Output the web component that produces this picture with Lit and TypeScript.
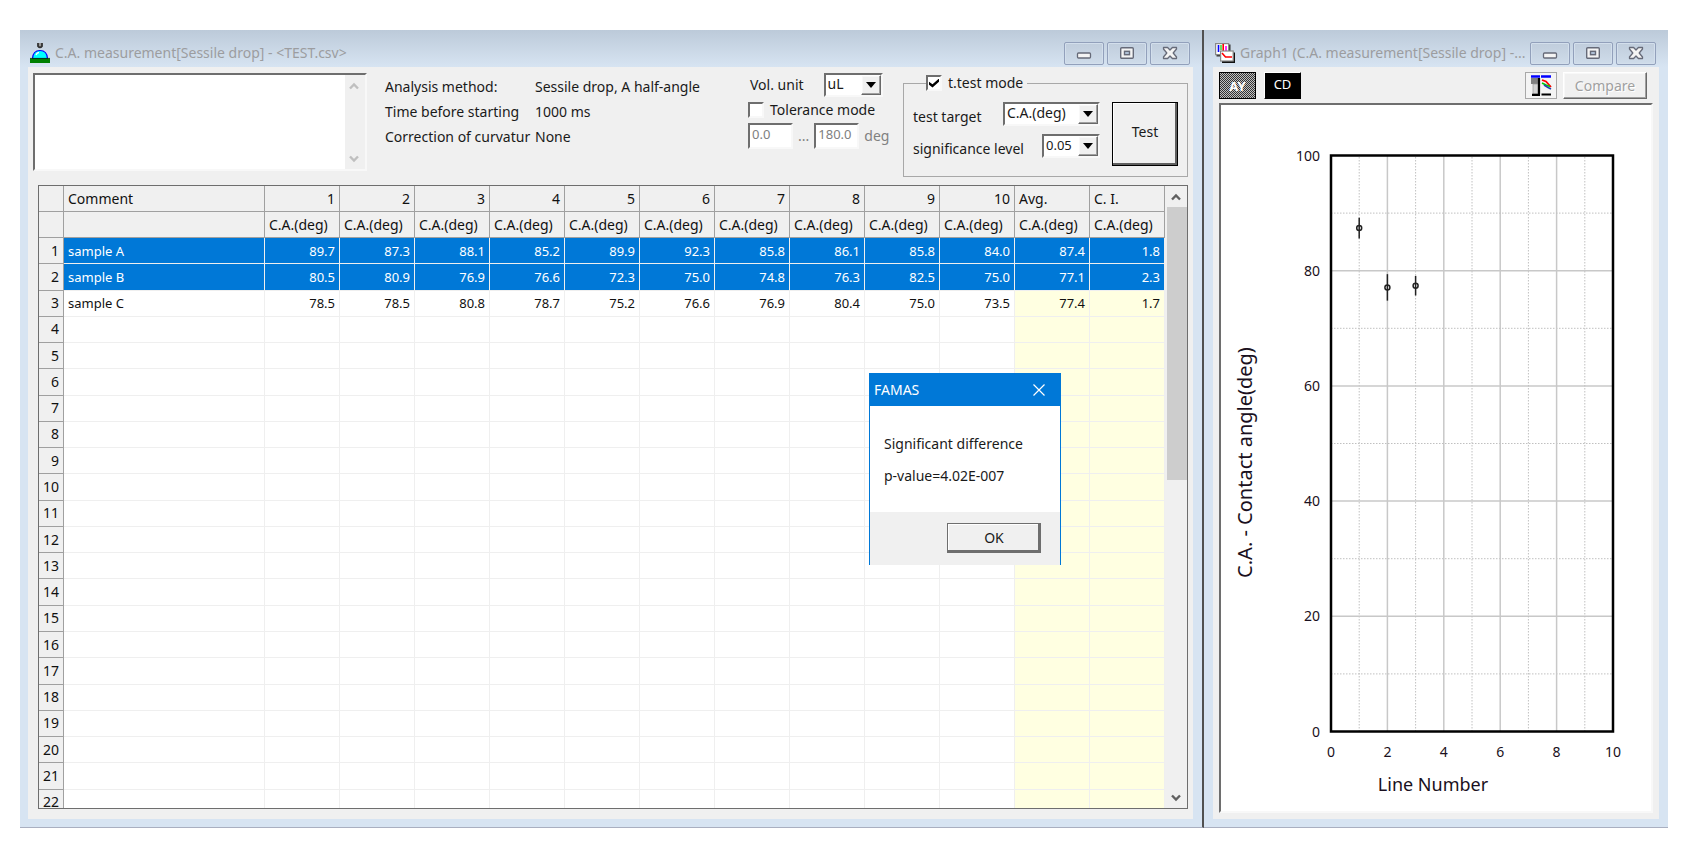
import { LitElement, html, svg, css, nothing } from "lit";
import { customElement, property } from "lit/decorators.js";
import { classMap } from "lit/directives/class-map.js";

const base = css`
  * {
    box-sizing: border-box;
  }
  button,
  input,
  select,
  textarea {
    font: inherit;
    color: inherit;
    margin: 0;
    padding: 0;
    border-radius: 0;
  }
  .raised {
    background: #f0f0f0;
    border: 1px solid;
    border-color: #fff #696969 #696969 #fff;
    box-shadow: inset -1px -1px 0 #a0a0a0, inset 1px 1px 0 #f8f8f8;
  }
  .sunken {
    background: #fff;
    border: 2px solid;
    border-color: #6e6e6e #f8f8f8 #f8f8f8 #6e6e6e;
  }
`;

const COLUMNS = ["1", "2", "3", "4", "5", "6", "7", "8", "9", "10"];
const ROW_COUNT = 22;

interface Sample {
  name: string;
  values: string[];
  avg: number;
  ci: number;
  selected: boolean;
}

const SAMPLES: Sample[] = [
  {
    name: "sample A",
    values: ["89.7", "87.3", "88.1", "85.2", "89.9", "92.3", "85.8", "86.1", "85.8", "84.0"],
    avg: 87.4,
    ci: 1.8,
    selected: true,
  },
  {
    name: "sample B",
    values: ["80.5", "80.9", "76.9", "76.6", "72.3", "75.0", "74.8", "76.3", "82.5", "75.0"],
    avg: 77.1,
    ci: 2.3,
    selected: true,
  },
  {
    name: "sample C",
    values: ["78.5", "78.5", "80.8", "78.7", "75.2", "76.6", "76.9", "80.4", "75.0", "73.5"],
    avg: 77.4,
    ci: 1.7,
    selected: false,
  },
];

@customElement("mdi-window")
class MdiWindow extends LitElement {
  @property() heading = "";

  static styles = [
    base,
    css`
      :host {
        display: flex;
        flex-direction: column;
        min-width: 0;
        min-height: 0;
        padding: 0 9px 8px;
        background: linear-gradient(#bccad9, #d7e4f2 37px);
        border-bottom: 1px solid #a9afc0;
      }
      .bar {
        display: flex;
        align-items: center;
        height: 37px;
        padding: 9px 3px 0 2px;
        flex: none;
      }
      .title {
        flex: 1;
        min-width: 0;
        margin: 0;
        padding-left: 5px;
        overflow: hidden;
        white-space: nowrap;
        font-size: 14px;
        font-weight: 400;
        line-height: 20px;
        color: #9c9da0;
      }
      .controls {
        display: flex;
        gap: 3px;
      }
      .control {
        display: grid;
        place-items: center;
        width: 40px;
        height: 23px;
        border: 1px solid #92a0bb;
        border-radius: 2px;
        background: linear-gradient(#c0cddc, #cfdcea);
        box-shadow: inset 0 0 0 1px #d3dfec;
      }
      .body {
        display: flex;
        flex-direction: column;
        flex: 1;
        min-height: 0;
        background: #f0f0f0;
      }
    `,
  ];

  render() {
    return html`
      <header class="bar">
        <slot name="icon"></slot>
        <h2 class="title">${this.heading}</h2>
        <div class="controls">
          <button class="control" aria-label="Minimize">
            <svg width="16" height="14" viewBox="0 0 16 14">
              <rect x="1.5" y="7" width="13" height="5" rx="1" fill="#f4f4f4" stroke="#666a78" stroke-width="1.3" />
            </svg>
          </button>
          <button class="control" aria-label="Maximize">
            <svg width="16" height="14" viewBox="0 0 16 14">
              <rect x="1.7" y="1.7" width="12.6" height="10.6" rx="1" fill="#f4f4f4" stroke="#666a78" stroke-width="1.4" />
              <rect x="5.5" y="5.3" width="5" height="3.4" fill="#aebfd4" stroke="#666a78" stroke-width="1.4" />
            </svg>
          </button>
          <button class="control" aria-label="Close">
            <svg width="16" height="14" viewBox="0 0 16 14">
              <path
                d="M1.5 1.5H5.6L8 4L10.4 1.5H14.5V3L11.2 7L14.5 11V12.5H10.4L8 10L5.6 12.5H1.5V11L4.8 7L1.5 3Z"
                fill="#f4f4f4"
                stroke="#666a78"
                stroke-width="1.3"
                stroke-linejoin="round"
              />
            </svg>
          </button>
        </div>
      </header>
      <div class="body"><slot></slot></div>
    `;
  }
}

@customElement("scroll-strip")
class ScrollStrip extends LitElement {
  @property({ type: Number }) size = 0;

  static styles = [
    base,
    css`
      :host {
        display: flex;
        flex-direction: column;
        width: 20px;
        flex: none;
        background: #f0f0f0;
        color: #606060;
      }
      :host([disabled]) {
        color: #bfbfbf;
      }
      .arrow {
        display: grid;
        place-items: center;
        height: 21px;
        flex: none;
        padding-right: 2px;
        border: 0;
        background: none;
      }
      .track {
        flex: 1;
        min-height: 0;
      }
      .thumb {
        background: #cdcdcd;
      }
    `,
  ];

  render() {
    return html`
      <button class="arrow" aria-label="Scroll up">
        <svg width="10" height="8" viewBox="0 0 10 8">
          <path d="M1 6.5L5 2.5L9 6.5" fill="none" stroke="currentColor" stroke-width="2.4" />
        </svg>
      </button>
      <div class="track">
        ${this.size ? html`<div class="thumb" style="height:${this.size}%"></div>` : nothing}
      </div>
      <button class="arrow" aria-label="Scroll down">
        <svg width="10" height="8" viewBox="0 0 10 8">
          <path d="M1 1.5L5 5.5L9 1.5" fill="none" stroke="currentColor" stroke-width="2.4" />
        </svg>
      </button>
    `;
  }
}

@customElement("measure-toolbar")
class MeasureToolbar extends LitElement {
  static styles = [
    base,
    css`
      :host {
        display: grid;
        grid-template-columns: 334fr 345fr 137fr 285px;
        column-gap: 18px;
        padding: 6px 5px 8px;
        font-size: 14px;
        line-height: 18px;
        color: #1a1a1a;
        white-space: nowrap;
      }
      .memo {
        display: flex;
        height: 98px;
      }
      .memo textarea {
        flex: 1;
        min-width: 0;
        border: 0;
        outline: 0;
        resize: none;
      }
      .info {
        display: grid;
        grid-template-columns: 150px 1fr;
        grid-auto-rows: 25px;
        align-items: center;
        align-content: start;
        margin: 1px 0 0;
      }
      .info dt,
      .info dd {
        margin: 0;
      }
      .volume {
        display: flex;
        flex-direction: column;
        gap: 4px;
        min-width: 0;
      }
      .line {
        display: flex;
        align-items: center;
      }
      .unit {
        gap: 20px;
        padding-left: 2px;
      }
      .tolerance {
        gap: 6px;
      }
      .range {
        gap: 5px;
        color: #808080;
      }
      .range input {
        width: 45px;
        height: 26px;
        padding: 0 2px 5px;
        font-size: 13px;
      }
      .combo {
        display: grid;
        grid-template-columns: 1fr 20px;
        height: 24px;
      }
      .combo select {
        grid-area: 1 / 1 / 2 / 3;
        min-width: 0;
        padding: 0 20px 2px 2px;
        appearance: none;
        border: 0;
        outline: 0;
        background: none;
      }
      .drop {
        grid-area: 1 / 2;
        display: grid;
        place-items: center;
        pointer-events: none;
      }
      .w-unit {
        width: 59px;
      }
      .w-target {
        width: 97px;
      }
      .w-level {
        width: 58px;
        font-size: 13px;
      }
      .check {
        display: grid;
        place-items: center;
        width: 16px;
        height: 16px;
        appearance: none;
      }
      .check:checked::before {
        content: "";
        width: 10px;
        height: 9px;
        background: #000;
        clip-path: polygon(0 35%, 35% 65%, 100% 0, 100% 35%, 35% 100%, 0 70%);
      }
      .group {
        display: grid;
        grid-template-columns: 1fr auto;
        column-gap: 12px;
        height: 102px;
        min-width: 0;
        margin: 2px 0 0;
        padding: 11px 9px 0;
        border: 1px solid #a8a8a8;
      }
      .group legend {
        display: flex;
        align-items: center;
        gap: 6px;
        height: 16px;
        margin-left: 13px;
        padding: 0 4px 0 0;
      }
      .fields {
        display: flex;
        flex-direction: column;
        gap: 8px;
      }
      .field {
        display: flex;
        align-items: flex-end;
        justify-content: space-between;
      }
      .test {
        width: 66px;
        height: 64px;
        border-color: #000;
        box-shadow: inset -2px -2px 0 #606060, inset 1px 1px 0 #fff;
        padding-bottom: 4px;
      }
    `,
  ];

  private drop() {
    return html`<span class="drop raised">
      <svg width="10" height="6" viewBox="0 0 10 6"><path d="M0 0H10L5 6Z" fill="#000" /></svg>
    </span>`;
  }

  render() {
    return html`
      <div class="memo sunken">
        <textarea aria-label="Memo"></textarea>
        <scroll-strip disabled></scroll-strip>
      </div>
      <dl class="info">
        <dt>Analysis method:</dt>
        <dd>Sessile drop, A half-angle</dd>
        <dt>Time before starting</dt>
        <dd>1000 ms</dd>
        <dt>Correction of curvatur</dt>
        <dd>None</dd>
      </dl>
      <div class="volume">
        <div class="line unit">
          <label for="unit">Vol. unit</label>
          <span class="combo sunken w-unit">
            <select id="unit">
              <option>uL</option>
            </select>
            ${this.drop()}
          </span>
        </div>
        <div class="line tolerance">
          <input class="check sunken" id="tolerance" type="checkbox" />
          <label for="tolerance">Tolerance mode</label>
        </div>
        <div class="line range">
          <input class="sunken" aria-label="Minimum angle" value="0.0" readonly />
          <span>...</span>
          <input class="sunken" aria-label="Maximum angle" value="180.0" readonly />
          <span>deg</span>
        </div>
      </div>
      <fieldset class="group">
        <legend>
          <input class="check sunken" id="ttest" type="checkbox" checked />
          <label for="ttest">t.test mode</label>
        </legend>
        <div class="fields">
          <div class="field">
            <label for="target">test target</label>
            <span class="combo sunken w-target">
              <select id="target">
                <option>C.A.(deg)</option>
              </select>
              ${this.drop()}
            </span>
          </div>
          <div class="field">
            <label for="level">significance level</label>
            <span class="combo sunken w-level">
              <select id="level">
                <option>0.05</option>
              </select>
              ${this.drop()}
            </span>
          </div>
        </div>
        <button class="test raised">Test</button>
      </fieldset>
    `;
  }
}

@customElement("result-sheet")
class ResultSheet extends LitElement {
  static styles = [
    base,
    css`
      :host {
        display: flex;
        flex: 1;
        gap: 2px;
        min-height: 0;
        margin: 0 5px 10px 10px;
        border: 1px solid #6e6e6e;
      }
      .view {
        flex: 1;
        min-width: 0;
        overflow: hidden;
      }
      table {
        width: 100%;
        height: 630px;
        table-layout: fixed;
        border-collapse: separate;
        border-spacing: 0;
        font-size: 13px;
        line-height: 18px;
        color: #111;
      }
      tr {
        height: 26px;
      }
      th,
      td {
        padding: 0 4px;
        font-weight: 400;
        text-align: right;
        white-space: nowrap;
        overflow: hidden;
      }
      th {
        font-size: 14px;
        background: #f0f0f0;
        border-right: 1px solid #a0a0a0;
        border-bottom: 1px solid #a0a0a0;
      }
      td {
        background: #fff;
        border-right: 1px solid #efefef;
        border-bottom: 1px solid #efefef;
      }
      .left {
        text-align: left;
      }
      .stat {
        background: #ffffe1;
      }
      .selected td {
        background: #0078d7;
        color: #fff;
      }
      .c-head {
        width: 25px;
      }
      .c-value {
        width: 75px;
      }
    `,
  ];

  private row(index: number) {
    const sample = SAMPLES[index];
    return html`<tr class=${classMap({ selected: !!sample?.selected })}>
      <th scope="row">${index + 1}</th>
      <td class="left">${sample?.name}</td>
      ${COLUMNS.map((_, i) => html`<td>${sample?.values[i]}</td>`)}
      <td class="stat">${sample?.avg.toFixed(1)}</td>
      <td class="stat">${sample?.ci.toFixed(1)}</td>
    </tr>`;
  }

  render() {
    return html`
      <div class="view">
        <table>
          <colgroup>
            <col class="c-head" />
            <col />
            <col class="c-value" span="12" />
          </colgroup>
          <thead>
            <tr>
              <th></th>
              <th class="left" scope="col">Comment</th>
              ${COLUMNS.map((c) => html`<th scope="col">${c}</th>`)}
              <th class="left" scope="col">Avg.</th>
              <th class="left" scope="col">C. I.</th>
            </tr>
            <tr>
              <th></th>
              <th></th>
              ${Array.from({ length: 12 }, () => html`<th class="left">C.A.(deg)</th>`)}
            </tr>
          </thead>
          <tbody>
            ${Array.from({ length: ROW_COUNT }, (_, i) => this.row(i))}
          </tbody>
        </table>
      </div>
      <scroll-strip size="47"></scroll-strip>
    `;
  }
}

@customElement("angle-graph")
class AngleGraph extends LitElement {
  static styles = [
    base,
    css`
      :host {
        display: flex;
        flex-direction: column;
        flex: 1;
        min-height: 0;
        padding: 5px 6px 6px;
      }
      .tools {
        display: flex;
        align-items: center;
        gap: 8px;
        height: 27px;
        margin-bottom: 4px;
        padding-right: 6px;
        font-size: 14px;
        line-height: 18px;
      }
      .mode {
        width: 37px;
        height: 27px;
        border: 1px solid;
        border-color: #fff #000 #000 #fff;
        background: #000;
        color: #fff;
        font-size: 13px;
        padding-bottom: 3px;
      }
      .mode.average {
        border-color: #000;
        background: repeating-conic-gradient(#333 0 25%, #c0c0c0 0 50%) 0 0 / 2px 2px;
        font-weight: 700;
        padding: 0;
      }
      .layout {
        display: grid;
        place-items: center;
        width: 32px;
        height: 27px;
        margin-left: auto;
        border: 1px solid #a8a8a8;
        background: #f4f4f4;
      }
      .compare {
        width: 84px;
        height: 27px;
        margin-left: -2px;
        color: #a0a0a0;
        text-shadow: 1px 1px 0 #fff;
      }
      .canvas {
        flex: 1;
        min-height: 0;
      }
      .plot {
        display: block;
        width: 100%;
        height: 100%;
      }
      .tick {
        font-size: 14px;
        fill: #1a1020;
      }
      .axis {
        font-size: 18px;
        fill: #1a1020;
        text-anchor: middle;
      }
      .axis.vertical {
        font-size: 20px;
      }
      .end {
        text-anchor: end;
      }
      .middle {
        text-anchor: middle;
      }
      .major {
        stroke: #c8c8c8;
        stroke-width: 1.5;
      }
      .minor {
        stroke: #c0c0c0;
        stroke-dasharray: 1.5 1.5;
      }
      .mark {
        fill: none;
        stroke: #222;
        stroke-width: 1.5;
      }
    `,
  ];

  private plot() {
    const x = (v: number) => 111 + v * 28.2;
    const y = (v: number) => 626 - v * 5.76;
    const steps = [1, 2, 3, 4, 5, 6, 7, 8, 9];
    const kind = (v: number) => (v % 2 ? "minor" : "major");
    return html`<svg class="plot" viewBox="1 1 430 703" role="img" aria-label="Contact angle by line number">
      ${steps.map(
        (v) => svg`
          <line class=${kind(v)} x1=${x(v)} x2=${x(v)} y1=${y(0)} y2=${y(100)} />
          <line class=${kind(v)} x1=${x(0)} x2=${x(10)} y1=${y(v * 10)} y2=${y(v * 10)} />`
      )}
      <rect x=${x(0)} y=${y(100)} width="282" height="576" fill="none" stroke="#000" stroke-width="2.5" />
      ${[0, 2, 4, 6, 8, 10].map(
        (v) => svg`
          <text class="tick end" x="100" y=${y(v * 10) + 5}>${v * 10}</text>
          <text class="tick middle" x=${x(v)} y="651">${v}</text>`
      )}
      ${SAMPLES.map(
        (s, i) => svg`
          <line class="mark" x1=${x(i + 1)} x2=${x(i + 1)} y1=${y(s.avg - s.ci)} y2=${y(s.avg + s.ci)} />
          <circle class="mark" cx=${x(i + 1)} cy=${y(s.avg)} r="2.5" />`
      )}
      <text class="axis" x="213" y="685">Line Number</text>
      <text class="axis vertical" transform="translate(32 357) rotate(-90)">C.A. - Contact angle(deg)</text>
    </svg>`;
  }

  render() {
    return html`
      <div class="tools">
        <button class="mode average">AY</button>
        <button class="mode">CD</button>
        <button class="layout" aria-label="Graph layout">
          <svg width="22" height="21" viewBox="0 0 22 21">
            <path d="M1 1.5H10M11 1.5H21" stroke="#00f" stroke-width="2.6" />
            <path d="M1 3H8V9H1Z" fill="#808080" />
            <path d="M3 9H8V19H3Z" fill="#d4d4d4" stroke="#999" stroke-width="0.7" />
            <path d="M9 3V19.5M2 19.8H10M11.5 19.5H21" stroke="#000" stroke-width="2.2" fill="none" />
            <path d="M12 5L16 6.5L21 12" stroke="#f00" stroke-width="1.8" fill="none" />
            <path d="M12 8L16 10L20 11.5" stroke="#0c0" stroke-width="1.8" fill="none" />
            <path d="M14 10L18 12.5L21 14" stroke="#24a" stroke-width="1.6" fill="none" />
          </svg>
        </button>
        <button class="compare raised">Compare</button>
      </div>
      <div class="canvas sunken">${this.plot()}</div>
    `;
  }
}

@customElement("message-box")
class MessageBox extends LitElement {
  static styles = [
    base,
    css`
      :host {
        display: flex;
        flex-direction: column;
        width: 192px;
        background: #fff;
        border: solid #0078d7;
        border-width: 0 1px;
        font-size: 14px;
        line-height: 20px;
        color: #1a1a1a;
      }
      .bar {
        display: flex;
        align-items: center;
        justify-content: space-between;
        height: 33px;
        padding: 0 15px 0 4px;
        background: #0078d7;
        color: #fff;
      }
      .title {
        margin: 0;
        font-size: 14px;
        font-weight: 400;
      }
      .close {
        display: grid;
        place-items: center;
        border: 0;
        background: none;
      }
      .message {
        display: flex;
        flex-direction: column;
        gap: 12px;
        height: 106px;
        padding: 28px 14px 0;
      }
      .message p {
        margin: 0;
      }
      .actions {
        display: flex;
        justify-content: flex-end;
        padding: 11px 19px 12px;
        background: #f0f0f0;
      }
      .ok {
        width: 94px;
        height: 30px;
        border-color: #6e6e6e;
        box-shadow: inset -2px -2px 0 #6e6e6e, inset 1px 1px 0 #fff;
      }
    `,
  ];

  render() {
    return html`
      <header class="bar">
        <h2 class="title">FAMAS</h2>
        <button class="close" aria-label="Close">
          <svg width="12" height="12" viewBox="0 0 12 12">
            <path d="M0.5 0.5L11.5 11.5M11.5 0.5L0.5 11.5" stroke="#fff" stroke-width="1.2" />
          </svg>
        </button>
      </header>
      <div class="message">
        <p>Significant difference</p>
        <p>p-value=4.02E-007</p>
      </div>
      <footer class="actions"><button class="ok raised">OK</button></footer>
    `;
  }
}

@customElement("app-root")
class AppRoot extends LitElement {
  static styles = [
    base,
    css`
      :host {
        display: grid;
        grid-template-columns: 1184fr 464fr;
        position: relative;
        height: 100vh;
        padding: 30px 20px;
        box-sizing: border-box;
        overflow: hidden;
        background: #fff;
        font-family: "Noto Sans", "Open Sans", sans-serif;
      }
      .measure {
        border-right: 2px solid #505050;
        padding-left: 8px;
      }
      .dialog {
        position: absolute;
        left: 869px;
        top: 373px;
      }
    `,
  ];

  render() {
    return html`
      <mdi-window class="measure" heading="C.A. measurement[Sessile drop] - <TEST.csv>">
        <svg slot="icon" width="20" height="20" viewBox="0 0 20 20">
          <path d="M2.5 15.5Q3 7.5 10 7.5Q17 7.5 17.5 15.5Z" fill="#0ff" stroke="#00f" stroke-width="1.2" />
          <path d="M6 12Q7 9.5 9 9.5" fill="none" stroke="#fff" stroke-width="1.4" />
          <path d="M8 0V3.2Q10 5.6 12 3.2V0" fill="#999" stroke="#333" stroke-width="1.8" />
          <rect y="15.5" width="20" height="4.5" fill="#008000" />
          <path d="M0 15.4H20" stroke="#030" stroke-width="0.8" />
        </svg>
        <measure-toolbar></measure-toolbar>
        <result-sheet></result-sheet>
      </mdi-window>
      <mdi-window heading="Graph1 (C.A. measurement[Sessile drop] -...">
        <svg slot="icon" width="20" height="20" viewBox="0 0 20 20">
          <rect x="1.5" y="1.5" width="14" height="12" fill="#333" />
          <rect x="0.6" y="0.6" width="13" height="11" fill="#fff" stroke="#888" stroke-width="1.2" />
          <path d="M3.5 2V9" stroke="#00f" stroke-width="1.6" />
          <path d="M6 2V7" stroke="#0c0" stroke-width="1.2" />
          <path d="M8.2 1V11" stroke="#f00" stroke-width="1.6" />
          <path d="M11 3V9" stroke="#f0f" stroke-width="1.6" />
          <rect x="7" y="9.5" width="13" height="10.5" fill="#111" />
          <rect x="5.6" y="8" width="12.6" height="10" fill="#fff" stroke="#888" stroke-width="1.2" />
          <path d="M7 10L10.5 14H17" fill="none" stroke="#f00" stroke-width="1.6" />
        </svg>
        <angle-graph></angle-graph>
      </mdi-window>
      <message-box class="dialog" role="dialog" aria-label="FAMAS"></message-box>
    `;
  }
}
